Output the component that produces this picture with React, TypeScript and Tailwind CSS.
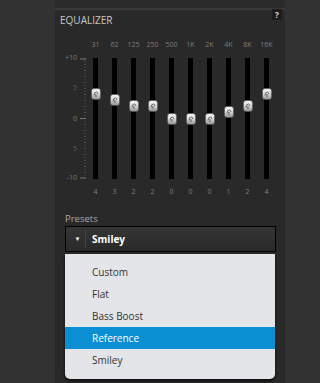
import React from "react";

const freqs = ["31", "62", "125", "250", "500", "1K", "2K", "4K", "8K", "16K"];
const vals = [4, 3, 2, 2, 0, 0, 0, 1, 2, 4];
const presets = ["Custom", "Flat", "Bass Boost", "Reference", "Smiley"];

function Knob() {
  return (
    <svg width="10" height="12" viewBox="0 0 10 12">
      <defs>
        <linearGradient id="kg" x1="0" y1="0" x2="0" y2="1">
          <stop offset="0" stopColor="#f6f6f6" />
          <stop offset="0.5" stopColor="#d8d8d8" />
          <stop offset="1" stopColor="#909090" />
        </linearGradient>
      </defs>
      <rect x="0.5" y="0.5" width="9" height="11" rx="2.5" fill="url(#kg)" stroke="#555" strokeWidth="0.6" />
      <path d="M3 7.5 Q3 4 5.5 4 Q7 4.3 6.8 6" fill="none" stroke="#666" strokeWidth="1" />
      <rect x="4.2" y="6" width="1.4" height="3" fill="#777" />
    </svg>
  );
}

function Scale() {
  const minors = [];
  for (let i = 0; i <= 20; i++) minors.push(i);
  return (
    <div className="relative w-[31px] h-[121px]">
      <svg className="absolute left-0 top-0" width="31" height="121" viewBox="0 0 31 121">
        {minors.map((i) => (
          <line key={i} x1="29" x2="31" y1={0.5 + i * 6} y2={0.5 + i * 6} stroke="#555" strokeWidth="1" />
        ))}
        <line x1="30" x2="30" y1="0" y2="121" stroke="#4a4a4a" strokeWidth="1" strokeDasharray="1 2" />
        <line x1="25" x2="33" y1="1" y2="1" stroke="#777" strokeWidth="1" />
        <line x1="25" x2="33" y1="60.5" y2="60.5" stroke="#777" strokeWidth="1" />
        <line x1="25" x2="33" y1="120" y2="120" stroke="#777" strokeWidth="1" />
      </svg>
      <span className="absolute right-[9px] top-[-4px] text-[7px] leading-[8px] text-[#7a7a7a]">+10</span>
      <span className="absolute right-[9px] top-[26px] text-[7px] leading-[8px] text-[#5a5a5a]">5</span>
      <span className="absolute right-[9px] top-[57px] text-[7px] leading-[8px] text-[#7a7a7a]">0</span>
      <span className="absolute right-[9px] top-[87px] text-[7px] leading-[8px] text-[#5a5a5a]">5</span>
      <span className="absolute right-[9px] top-[116px] text-[7px] leading-[8px] text-[#7a7a7a]">-10</span>
    </div>
  );
}

export default function App() {
  return (
    <div
      className="w-[320px] h-[383px] bg-[#323232] flex overflow-hidden"
      style={{ fontFamily: '"Open Sans", "Noto Sans", sans-serif' }}
    >
      <div className="w-[55px] shrink-0" />
      <div className="w-[230px] flex flex-col">
        <div className="h-[8px] bg-[#2b2b2b]" />
        <div className="h-[2px] bg-[#383838]" />
        <div className="flex-1 bg-[#292929] relative">
          <div className="flex items-start justify-between pl-[5px] pr-[3px]">
            <div className="pt-[3px] text-[10px] leading-[14px] text-[#c8c8c8]">EQUALIZER</div>
            <div className="mt-[-1px] w-[10px] h-[11px] bg-[#1c1c1c] text-[8px] leading-[11px] font-bold text-[#ddd] text-center">?</div>
          </div>
          <div className="mt-[13px] flex">
            <div className="w-[31px] pt-[18px]">
              <Scale />
            </div>
            {freqs.map((f, i) => (
              <div key={f} className="w-[19px] flex flex-col items-center">
                <div className="h-[10px] text-[7px] leading-[10px] text-[#7e7e7e] whitespace-nowrap">{f}</div>
                <div className="mt-[8px] w-[5px] h-[121px] bg-black relative">
                  <div
                    className="absolute left-[-2.5px]"
                    style={{ top: `${60.5 - vals[i] * 6.05 - 6}px` }}
                  >
                    <Knob />
                  </div>
                </div>
                <div className="mt-[8px] h-[10px] text-[7px] leading-[10px] text-[#7e7e7e]">{vals[i]}</div>
              </div>
            ))}
          </div>
          <div className="mt-[16px] pl-[10px] text-[9.5px] leading-[12px] text-[#a8a8a8]">Presets</div>
          <div className="mt-[1px] ml-[10px] w-[211px] relative">
            <div className="h-[26px] border border-black bg-gradient-to-b from-[#353535] to-[#2a2a2a] flex items-center">
              <div className="w-[19px] pl-[4px] flex justify-center text-[6px] text-white">▼</div>
              <div className="w-[1px] h-[18px] bg-[#111] border-r border-[#444]" />
              <div className="pl-[6px] text-[10px] font-bold text-white">Smiley</div>
            </div>
            <div className="absolute left-0 top-[28px] w-[210px] bg-[#e3e5e8] rounded-b-[5px] pt-[7px] pb-[8px] shadow-[0_2px_3px_rgba(0,0,0,0.7)]">
              {presets.map((p) => (
                <div
                  key={p}
                  className={
                    p === "Reference"
                      ? "h-[22px] pl-[27px] flex items-center text-[10px] text-white bg-[#0a8fd2]"
                      : "h-[22px] pl-[27px] flex items-center text-[10px] text-[#333]"
                  }
                >
                  {p}
                </div>
              ))}
            </div>
          </div>
        </div>
      </div>
    </div>
  );
}
